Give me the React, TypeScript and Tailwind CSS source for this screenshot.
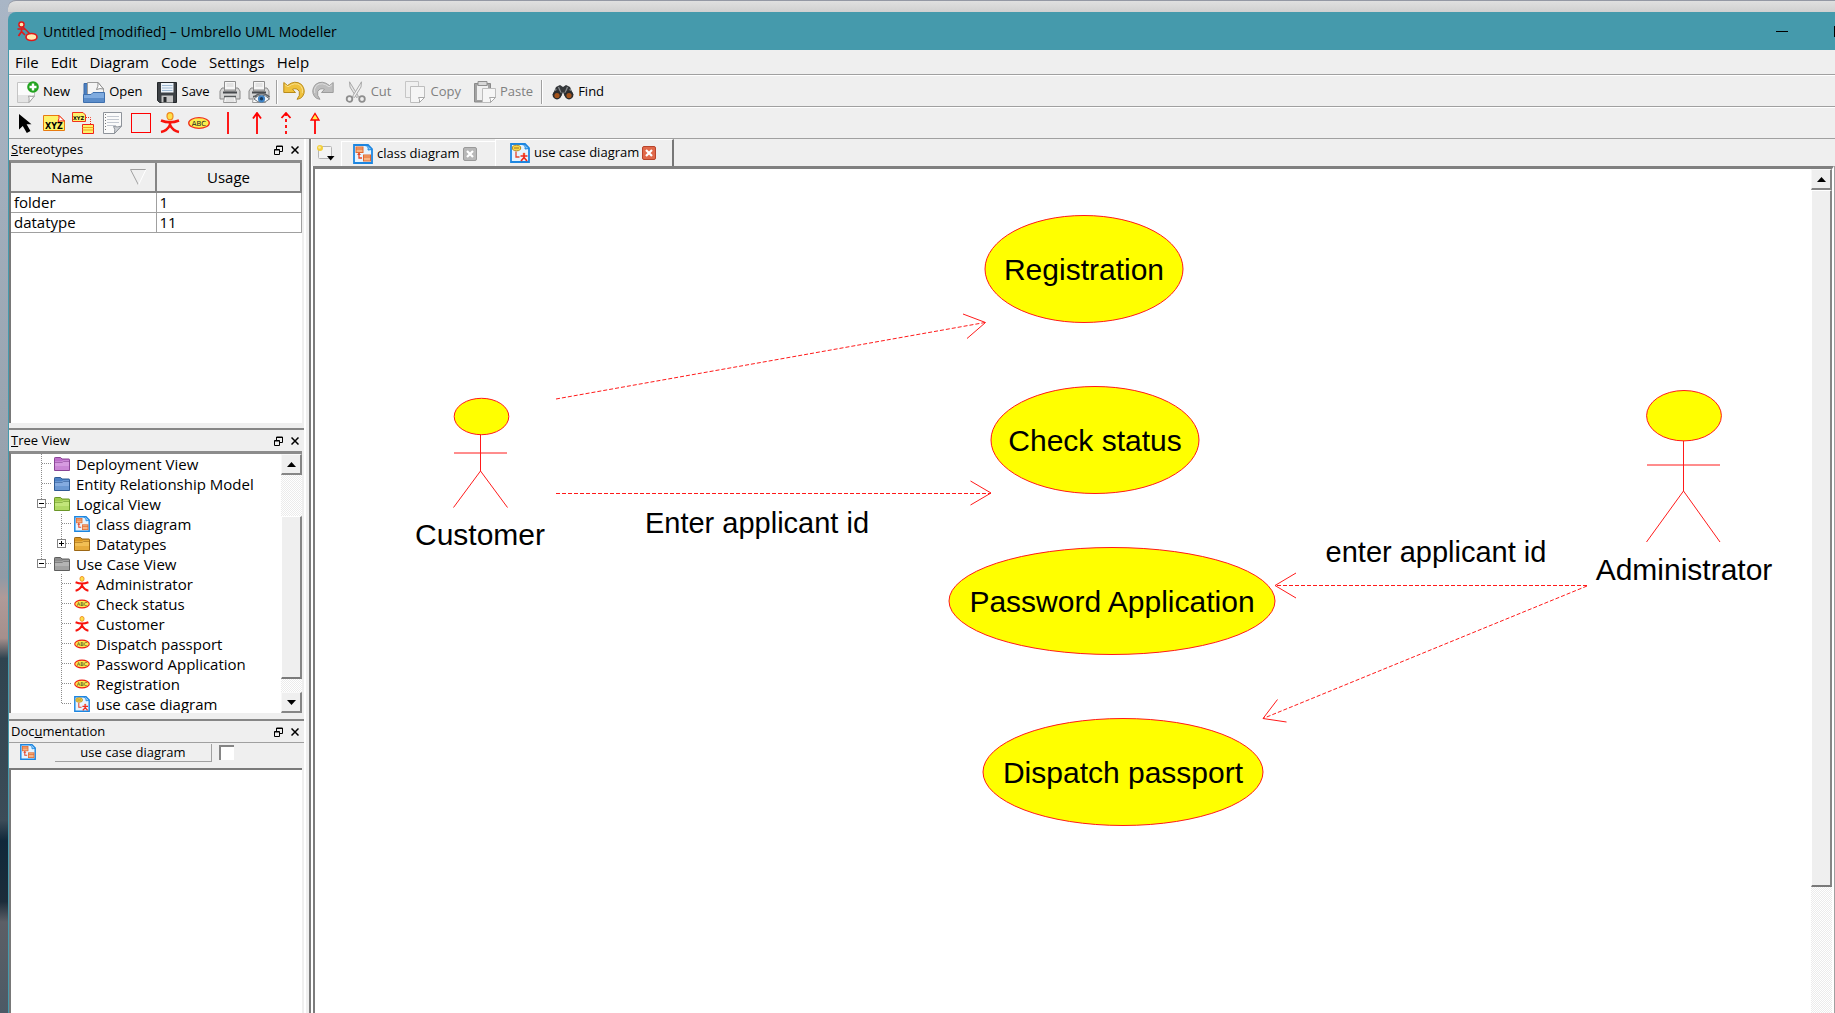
import { useState, type ReactNode } from "react";

type Kind =
  | "folder-purple"
  | "folder-blue"
  | "folder-green"
  | "folder-orange"
  | "folder-gray"
  | "class"
  | "usecase-diagram"
  | "actor"
  | "usecase";

/* ---------- icons ---------- */

function Folder({ light, dark, edge }: { light: string; dark: string; edge: string }) {
  return (
    <svg width="16" height="16" viewBox="0 0 16 16" aria-hidden="true">
      <path d="M.5 14.5V2.2Q.5 1.5 1.2 1.5H6.6L8 3H15Q15.500 3 15.500 3.600V14.500Z" fill={dark} stroke={edge} />
      <path d="M1 5.500H7.500L9 4.500H15V14H1Z" fill={light} />
      <path d="M1 6.500H8L9.500 5.500H15" fill="none" stroke={edge} strokeOpacity=".6" />
      <path d="M1 10H15V14H1Z" fill={dark} fillOpacity=".45" />
    </svg>
  );
}

function ClassDiagramIcon({ size }: { size: number }) {
  return (
    <svg width={size} height={size} viewBox="0 0 20 20" aria-hidden="true">
      <path d="M1 1H15L19 5V19H1Z" fill="#e6f4fe" stroke="#1d86e0" strokeWidth="1.800" />
      <path d="M12 1.500Q16 2 15 6L19 5.500" fill="#7cc4f8" stroke="#1d86e0" />
      <rect x="3" y="3" width="7" height="5.500" fill="#f7b483" stroke="#e26a31" />
      <path d="M3 5H10" stroke="#e26a31" />
      <path d="M6 9V14H9" fill="none" stroke="#e8472a" strokeWidth="1.300" />
      <path d="M4 11 6 8.800 8 11Z" fill="#e8472a" />
      <rect x="10.500" y="11" width="7" height="6" fill="#f7b483" stroke="#e26a31" />
      <path d="M10.500 13H17.500" stroke="#e26a31" />
    </svg>
  );
}

function UseCaseDiagramIcon({ size }: { size: number }) {
  return (
    <svg width={size} height={size} viewBox="0 0 20 20" aria-hidden="true">
      <path d="M1 1H15L19 5V19H1Z" fill="#e6f4fe" stroke="#1d86e0" strokeWidth="1.800" />
      <path d="M12 1.500Q16 2 15 6L19 5.500" fill="#7cc4f8" stroke="#1d86e0" />
      <ellipse cx="6.500" cy="5" rx="4.200" ry="2.800" fill="#f6d84a" stroke="#b78a1c" />
      <path d="M4 5H9" stroke="#a4701a" />
      <path d="M6 8.500V14H9.500" fill="none" stroke="#e8472a" strokeWidth="1.300" />
      <circle cx="14" cy="11" r="1.300" fill="#f5532e" />
      <path d="M10.500 13H17.500M14 12V15M14 14.500 11 18M14 14.500 17 18" stroke="#f02a1c" strokeWidth="1.700" />
    </svg>
  );
}

function ActorIcon({ size }: { size: number }) {
  return (
    <svg width={size} height={size} viewBox="0 0 20 20" aria-hidden="true">
      <ellipse cx="10" cy="3.600" rx="2.600" ry="3.100" fill="#fde04a" stroke="#f08a20" strokeWidth="1.100" />
      <path d="M2 7.800Q10 11 18 7.800M10 8V13M2 18.500Q7 17.500 10 12Q13 17.500 18 18.500" fill="none" stroke="#f8130c" strokeWidth="2.600" />
    </svg>
  );
}

function UseCaseIcon({ width }: { width: number }) {
  return (
    <svg width={width} height={width / 2 + 2} viewBox="0 0 22 13" aria-hidden="true">
      <ellipse cx="11" cy="6.500" rx="10" ry="5.300" fill="#fbe94e" stroke="#f01a10" strokeWidth="1.500" />
      <text x="11" y="9" textAnchor="middle" fontSize="7" fill="#3c3a1c" fontFamily="DejaVu Sans, sans-serif">
        ABC
      </text>
    </svg>
  );
}

function KindIcon({ kind }: { kind: Kind }) {
  switch (kind) {
    case "folder-purple":
      return <Folder light="#d79be0" dark="#bd6fca" edge="#8a4596" />;
    case "folder-blue":
      return <Folder light="#84abe0" dark="#4d80c4" edge="#2f5a94" />;
    case "folder-green":
      return <Folder light="#c2e67a" dark="#9ecb4c" edge="#6a9628" />;
    case "folder-orange":
      return <Folder light="#f2bf54" dark="#d99520" edge="#9c6714" />;
    case "folder-gray":
      return <Folder light="#b4b4b4" dark="#8c8c8c" edge="#5e5e5e" />;
    case "class":
      return <ClassDiagramIcon size={16} />;
    case "usecase-diagram":
      return <UseCaseDiagramIcon size={16} />;
    case "actor":
      return <ActorIcon size={16} />;
    default:
      return <UseCaseIcon width={16} />;
  }
}

function Icon22({ children }: { children: ReactNode }) {
  return (
    <svg width="22" height="22" viewBox="0 0 22 22" className="shrink-0" aria-hidden="true">
      {children}
    </svg>
  );
}

const NewIcon = () => (
  <Icon22>
    <path d="M.5 1.500H17.500V15L12 21.500H.5Z" fill="#fbfbfb" stroke="#c4c4c4" />
    <path d="M1 14H17V15.500L12 21H1Z" fill="#e4e4e4" />
    <path d="M17.500 15 12 21.500Q12.500 16 11.500 15Q15 16 17.500 15Z" fill="#fff" stroke="#a2a2a2" />
    <circle cx="16" cy="6" r="5.800" fill="#22a31f" />
    <path d="M16 2.500V9.500M12.500 6H19.500" stroke="#fff" strokeWidth="2.400" />
  </Icon22>
);

const OpenIcon = () => (
  <Icon22>
    <path d="M1 2.500H8L9 6V14H1Z" fill="#4a7fc0" stroke="#3c6aa6" />
    <path d="M4.500 14V1.500H15L20.500 8V14Z" fill="#f4f4f4" stroke="#9c9c9c" />
    <path d="M15 1.500 20.500 8Q17 7 13.500 8.500Q15.500 5.500 15 1.500Z" fill="#fff" stroke="#8e8e8e" />
    <path d="M.5 21.500V13.500H8L10 11.500H21.500V21.500Z" fill="#7fabdf" stroke="#3f70ae" />
    <path d="M1 17H21V21H1Z" fill="#5b8dca" />
  </Icon22>
);

const SaveIcon = () => (
  <Icon22>
    <path d="M1.500 1.500H20.500V21.500H3.500L1.500 19.500Z" fill="#3d4145" stroke="#24282b" />
    <path d="M5 2H17.500V11.500H5Z" fill="#eef4fa" />
    <path d="M6 4.500H16.500M6 7H16.500M6 9.500H16.500" stroke="#9fb9d2" />
    <path d="M5.500 14.500H17V21.500H5.500Z" fill="#c6c6c6" />
    <path d="M7.500 16H10.500V21H7.500Z" fill="#26292c" />
  </Icon22>
);

const PrinterShape = () => (
  <>
    <path d="M5.500.5H16.500V9H5.500Z" fill="#f6f6f6" stroke="#8e8e8e" />
    <path d="M7.500 3H14.500M7.500 5H14.500" stroke="#cfcfcf" />
    <path d="M3 7H5.500V10H16.500V7H19L21 10V18H1V10Z" fill="#d6d6d6" stroke="#8a8a8a" />
    <path d="M4 10.500H18V12.500H4Z" fill="#46494c" />
    <path d="M5.500 15.500H16.500L17.500 21.500H4.500Z" fill="#fafafa" stroke="#9a9a9a" />
    <path d="M5 15.500H17" stroke="#55585a" strokeWidth="1.500" />
  </>
);

const PrintIcon = () => (
  <Icon22>
    <PrinterShape />
    <path d="M7 18H15M6.500 20H15.500" stroke="#cfcfcf" />
  </Icon22>
);

const PreviewIcon = () => (
  <Icon22>
    <PrinterShape />
    <path d="M6 18Q13.500 10 21.500 18Q13.500 25 6 18Z" fill="#f4f8fb" stroke="#6d7277" />
    <circle cx="13.500" cy="17.800" r="3.600" fill="#3f83c6" />
    <circle cx="13.500" cy="17.800" r="1.700" fill="#173a5e" />
    <path d="M6 16Q13.500 9 21.500 16" fill="none" stroke="#5e6266" strokeWidth="1.500" />
  </Icon22>
);

const UndoIcon = () => (
  <Icon22>
    <path
      d="M.8 1.500 4.500 4.500Q12-1.500 18.500 3.500Q23.500 9.500 19.500 15.500Q17.500 18 14 18.300Q17.500 14.500 16.300 10.500Q14 6.500 9.500 8.300L12.500 11.500H.8Z"
      fill="#efc13c"
      stroke="#b98b1b"
    />
    <path d="M2 3.800 5 5.800Q12 .5 17.500 4.500Q20.500 8 19.300 12" fill="none" stroke="#f9e08a" />
  </Icon22>
);

const RedoIcon = () => (
  <Icon22>
    <path
      d="M21.200 1.500 17.500 4.500Q10-1.500 3.500 3.500Q-1.500 9.500 2.500 15.500Q4.500 18 8 18.300Q4.500 14.500 5.700 10.500Q8 6.500 12.500 8.300L9.500 11.500H21.200Z"
      fill="#bdbdbd"
      stroke="#9d9d9d"
    />
    <path d="M20 3.800 17 5.800Q10 .5 4.500 4.500Q1.500 8 2.700 12" fill="none" stroke="#dcdcdc" />
  </Icon22>
);

const CutIcon = () => (
  <Icon22>
    <path d="M4.500.8 13.500 15.500 11.500 16.500 5 6Z" fill="#e6e6e6" stroke="#a8a8a8" />
    <path d="M16.500.8 7.500 15.500 9.500 16.500 16 6Z" fill="#f2f2f2" stroke="#a8a8a8" />
    <circle cx="4.500" cy="18" r="2.800" fill="none" stroke="#8e8e8e" strokeWidth="1.800" />
    <circle cx="17" cy="18" r="2.800" fill="none" stroke="#8e8e8e" strokeWidth="1.800" />
  </Icon22>
);

const CopyIcon = () => (
  <Icon22>
    <path d="M1.500.5H14.500V16.500H1.500Z" fill="#f0f0f0" stroke="#c6c6c6" />
    <path d="M6.500 5.500H20.500V16.500L15.500 21.500H6.500Z" fill="#f5f5f5" stroke="#bdbdbd" />
    <path d="M20.500 16.500 15.500 21.500Q16 18 14.500 16.500Z" fill="#fff" stroke="#a8a8a8" />
  </Icon22>
);

const PasteIcon = () => (
  <Icon22>
    <path d="M.5 2.500H16.500V21H.5Z" fill="#a2a2a2" stroke="#8a8a8a" />
    <path d="M3 4.500H14V19H3Z" fill="#f0f0f0" />
    <path d="M4 .5H13V4.500H4Z" fill="#d8d8d8" stroke="#8f8f8f" />
    <path d="M8.500 7.500H21.500V16.500L16.500 21.500H8.500Z" fill="#f6f6f6" stroke="#bdbdbd" />
    <path d="M21.500 16.500 16.500 21.500Q17 18 15.500 16.500Z" fill="#fff" stroke="#a8a8a8" />
  </Icon22>
);

const FindIcon = () => (
  <Icon22>
    <path d="M4 6 8 4 11 6 14 4 18 6 21.500 14 12.500 15 11 11 9.500 15 .5 14Z" fill="#34373a" />
    <path d="M6.500 6 9 12M15.500 6 13 12M4 8 3 12M18 8 19 12" stroke="#85898c" strokeWidth="1.300" />
    <circle cx="5" cy="14" r="4.400" fill="#2a2c2e" />
    <circle cx="17" cy="14" r="4.400" fill="#2a2c2e" />
    <circle cx="5" cy="14.500" r="2.600" fill="#a4541c" />
    <circle cx="17" cy="14.500" r="2.600" fill="#a4541c" />
  </Icon22>
);

const DrawTools: { name: string; art: ReactNode }[] = [
  {
    name: "Select",
    art: <path d="M5 2V17.500L8.800 14 12.800 21 16.500 19 12.600 12.300H17.500Z" fill="#000" />,
  },
  {
    name: "Note box",
    art: (
      <>
        <path d="M.5 3.500H16L21.500 9V18.500H.5Z" fill="#fdf36a" stroke="#e87a10" />
        <path d="M16 3.500 21.500 9Q17.500 8.500 15 9.500 16.500 6.500 16 3.500Z" fill="#fff" stroke="#f0201a" />
        <text x="11" y="17" textAnchor="middle" fontSize="8" fontWeight="700" fontFamily="DejaVu Sans, sans-serif">
          XYZ
        </text>
      </>
    ),
  },
  {
    name: "Anchor",
    art: (
      <>
        <path d="M.5.5H11L13.500 3V9.500H.5Z" fill="#fdf36a" stroke="#f0301a" />
        <text x="6.500" y="8" textAnchor="middle" fontSize="5" fontWeight="700" fontFamily="DejaVu Sans, sans-serif">
          XYZ
        </text>
        <path d="M14 5.500H18.500V12" fill="none" stroke="#f0301a" strokeDasharray="1 1" />
        <path d="M10.500 12.500H21.500V21.500H10.500Z" fill="#fdf36a" stroke="#f0201a" />
        <path d="M10.500 15.500H21.500M10.500 18H21.500" stroke="#f0a020" />
      </>
    ),
  },
  {
    name: "Note",
    art: (
      <>
        <path d="M2.500.5H20.500V14L13.500 21.500H2.500Z" fill="#fafafa" stroke="#8e939a" />
        <path d="M6 4.500H18M6 7.500H18M6 10.500H18M6 13.500H15" stroke="#c3c8d0" />
        <path d="M4.500 2V20" stroke="#777" strokeDasharray="1 2" />
        <path d="M20.500 14 13.500 21.500Q14.500 16.500 12.500 14.500Q17 15.500 20.500 14Z" fill="#cfd2d6" stroke="#8e939a" />
      </>
    ),
  },
  { name: "Box", art: <rect x="1.500" y="1.500" width="19" height="19" fill="none" stroke="#ff0000" /> },
  {
    name: "Actor",
    art: (
      <>
        <ellipse cx="11" cy="4.200" rx="3" ry="3.600" fill="#fde04a" stroke="#f08a20" strokeWidth="1.200" />
        <path d="M2 8.500Q11 12 20 8.500M11 9V14M2 20Q8 19 11 13Q14 19 20 20" fill="none" stroke="#f8130c" strokeWidth="2.600" />
      </>
    ),
  },
  {
    name: "Use case",
    art: (
      <>
        <ellipse cx="11" cy="11" rx="10.300" ry="5.300" fill="#fbf04e" stroke="#f0301a" strokeWidth="1.300" />
        <text x="11" y="13.600" textAnchor="middle" fontSize="7" fill="#222" fontFamily="DejaVu Sans, sans-serif">
          ABC
        </text>
      </>
    ),
  },
  { name: "Association", art: <path d="M11 0V22" stroke="#f00" strokeWidth="1.800" /> },
  {
    name: "Directed association",
    art: <path d="M11 22V1M7 6.500 11 1 15 6.500" fill="none" stroke="#f00" strokeWidth="1.800" />,
  },
  {
    name: "Dependency",
    art: (
      <path d="M11 1V4M11 7V10M11 13V16M11 19V22M6.500 6 11 1 15.500 6" fill="none" stroke="#f00" strokeWidth="1.800" />
    ),
  },
  {
    name: "Generalization",
    art: (
      <>
        <path d="M11 22V8" stroke="#f00" strokeWidth="1.800" />
        <path d="M7 8 11 1.500 15 8Z" fill="#fdf04a" stroke="#f00" strokeWidth="1.300" />
      </>
    ),
  },
];

/* ---------- small widgets ---------- */

function ToolButton({ icon, label, name, disabled }: { icon: ReactNode; label?: string; name?: string; disabled?: boolean }) {
  return (
    <button
      type="button"
      aria-label={label ?? name}
      disabled={disabled}
      className={
        label
          ? "flex h-full items-center gap-1 pr-[6px] pl-[7px] text-[13px] disabled:text-[#808080]"
          : "flex h-full w-[29px] items-center justify-center"
      }
    >
      {icon}
      {label}
    </button>
  );
}

const Separator = () => <div className="h-6 w-[2px] border-l border-[#a0a0a0] bg-white" />;

function DockTitle({ children }: { children: ReactNode }) {
  return (
    <div className="flex h-[21px] shrink-0 items-center pt-px pr-[5px] pl-[2px] text-[13px]">
      <h2 className="grow">{children}</h2>
      <button type="button" aria-label="Float" className="mr-2">
        <svg width="9" height="10" viewBox="0 0 9 10" aria-hidden="true">
          <path d="M2.500 4V1H8.500V6.500H6M2.500 1.500H8.500" fill="none" stroke="#000" />
          <path d="M.5 4.500H5.500V9.500H.5ZM.5 5H5.500" fill="none" stroke="#000" />
        </svg>
      </button>
      <button type="button" aria-label="Close">
        <svg width="8" height="8" viewBox="0 0 8 8" aria-hidden="true">
          <path d="M.5.5 7.500 7.500M7.500.5.5 7.500" stroke="#000" strokeWidth="1.500" />
        </svg>
      </button>
    </div>
  );
}

function ArrowButton({ up }: { up?: boolean }) {
  return (
    <button
      type="button"
      aria-label={up ? "Scroll up" : "Scroll down"}
      className="flex h-[21px] shrink-0 items-center justify-center border-t border-r-2 border-b-2 border-l border-t-[#f8f8f8] border-r-[#868686] border-b-[#868686] border-l-[#f8f8f8] bg-[#efefef]"
    >
      <svg width="9" height="5" viewBox="0 0 9 5" aria-hidden="true">
        <path d={up ? "M0 5 4.500 0 9 5Z" : "M0 0 4.500 5 9 0Z"} />
      </svg>
    </button>
  );
}

const track =
  "flex w-[21px] shrink-0 flex-col bg-[repeating-conic-gradient(#ebebeb_0_25%,#ffffff_0_50%)] bg-[length:2px_2px]";
const thumb =
  "border-t border-r-2 border-b-2 border-l border-t-white border-r-[#868686] border-b-[#7a7a7a] border-l-white bg-[#efefef]";

/* ---------- tree ---------- */

type Guide = "none" | "line" | "tee" | "end" | "minus" | "plus" | "last-minus";

const rows: { label: string; kind: Kind; guides: Guide[] }[] = [
  { label: "Deployment View", kind: "folder-purple", guides: ["tee"] },
  { label: "Entity Relationship Model", kind: "folder-blue", guides: ["tee"] },
  { label: "Logical View", kind: "folder-green", guides: ["minus"] },
  { label: "class diagram", kind: "class", guides: ["line", "tee"] },
  { label: "Datatypes", kind: "folder-orange", guides: ["line", "plus"] },
  { label: "Use Case View", kind: "folder-gray", guides: ["last-minus"] },
  { label: "Administrator", kind: "actor", guides: ["none", "tee"] },
  { label: "Check status", kind: "usecase", guides: ["none", "tee"] },
  { label: "Customer", kind: "actor", guides: ["none", "tee"] },
  { label: "Dispatch passport", kind: "usecase", guides: ["none", "tee"] },
  { label: "Password Application", kind: "usecase", guides: ["none", "tee"] },
  { label: "Registration", kind: "usecase", guides: ["none", "tee"] },
  { label: "use case diagram", kind: "usecase-diagram", guides: ["none", "end"] },
];

function GuideCell({ guide }: { guide: Guide }) {
  const box = guide === "minus" || guide === "plus" || guide === "last-minus";
  const full = guide === "line" || guide === "tee" || guide === "minus";
  const half = guide === "end" || guide === "last-minus" || guide === "plus";
  return (
    <svg width="20" height="20" viewBox="0 0 20 20" className="shrink-0" aria-hidden="true">
      {full && <path d="M9.500 0V20" stroke="#8c8c8c" strokeDasharray="1 1" />}
      {half && <path d="M9.500 0V10" stroke="#8c8c8c" strokeDasharray="1 1" />}
      {guide !== "none" && guide !== "line" && <path d="M10 9.500H19" stroke="#8c8c8c" strokeDasharray="1 1" />}
      {box && (
        <>
          <rect x="5.500" y="5.500" width="8" height="8" fill="#fff" stroke="#848484" />
          <path d={guide === "plus" ? "M7 9.500H12M9.500 7V12" : "M7 9.500H12"} stroke="#000" />
        </>
      )}
    </svg>
  );
}

/* ---------- diagram ---------- */

const useCases = [
  { label: "Registration", cx: 1084, cy: 269, rx: 99 },
  { label: "Check status", cx: 1095, cy: 440, rx: 104 },
  { label: "Password Application", cx: 1112, cy: 601, rx: 163 },
  { label: "Dispatch passport", cx: 1123, cy: 772, rx: 140 },
];

function Diagram() {
  return (
    <svg
      width="1496"
      height="844"
      viewBox="315 169 1496 844"
      className="block max-w-none shrink-0"
      fill="none"
      stroke="#ff1a1a"
      fontFamily="Liberation Sans, Arial, sans-serif"
      fontSize="30"
      role="img"
      aria-label="Use case diagram"
    >
      <path d="M556 399 985 322.500M556 493.500H991M1587 585.500H1275M1587 586 1263 718.500" strokeDasharray="4 2" />
      <path d="M963 314 985.500 322.500 967 338.500M970.500 481 991 493 970.500 505M1296 573 1275 585.500 1296 598M1277.500 699.500 1263 718.500 1286.500 722" />
      {useCases.map((u) => (
        <g key={u.label}>
          <ellipse cx={u.cx} cy={u.cy} rx={u.rx} ry="53.500" fill="#ffff00" />
          <text x={u.cx} y={u.cy + 11} textAnchor="middle" fill="#000" stroke="none">
            {u.label}
          </text>
        </g>
      ))}
      <ellipse cx="481.500" cy="416.500" rx="27.300" ry="18.200" fill="#ffff00" />
      <path d="M480.500 434.500V471M454 453H507M453.500 507.500 480.500 471 507.500 507.500" />
      <ellipse cx="1684" cy="415.700" rx="37.400" ry="25.200" fill="#ffff00" />
      <path d="M1683.500 441V491M1647 465H1720M1646.500 542 1683.500 491 1720 542" />
      <g fill="#000" stroke="none" textAnchor="middle">
        <text x="480" y="545">Customer</text>
        <text x="1684" y="580">Administrator</text>
      </g>
      <g fill="#000" stroke="none" textAnchor="middle" fontSize="29">
        <text x="757" y="533">Enter applicant id</text>
        <text x="1436" y="562">enter applicant id</text>
      </g>
    </svg>
  );
}

const TabClose = ({ active }: { active?: boolean }) => (
  <svg width="14" height="14" viewBox="0 0 14 14" aria-hidden="true">
    <rect x=".5" y=".5" width="13" height="13" rx="1.500" fill={active ? "#e0694a" : "#b8b8b8"} stroke={active ? "#b8432a" : "#9a9a9a"} />
    <path d="M4 4 10 10M10 4 4 10" stroke="#fff" strokeWidth="2.200" />
  </svg>
);

export default function App() {
  const [documented, setDocumented] = useState(false);
  return (
    <div className="flex h-screen overflow-hidden bg-[linear-gradient(180deg,#a9b6c6_0%,#9aa5b1_40%,#8f9aa6_57%,#b09a98_59%,#a58f8c_63%,#2f4450_65%,#3c4c58_81%,#10283a_83%,#1c2c3a_89%,#5c5f66_91%,#4c5a66_100%)] font-['Open_Sans','Noto_Sans',sans-serif] text-black">
      <div className="w-2 shrink-0" />
      <div className="flex min-w-0 grow flex-col">
        <div className="h-3 shrink-0 rounded-tl-lg border-t border-[#9498a4] bg-[linear-gradient(#e0e0e0,#d0d0d0)]" />
        <header className="flex h-[38px] shrink-0 items-center rounded-tl-lg bg-[#459aac] pl-[9px]">
          <svg width="21" height="21" viewBox="0 0 21 21" className="shrink-0" aria-hidden="true">
            <path d="M6 6 14 14" stroke="#d02020" strokeWidth="1.500" />
            <circle cx="4.500" cy="3.500" r="2.600" fill="#ffe9b0" stroke="#e01818" strokeWidth="1.500" />
            <path d="M4.500 6.500V10.500M.5 8H8M1.500 15 4.500 10.500 8 14" fill="none" stroke="#e01818" strokeWidth="1.700" />
            <ellipse cx="14.500" cy="16" rx="5.500" ry="3.500" fill="#ffe9b0" stroke="#e01818" strokeWidth="1.600" />
          </svg>
          <h1 className="ml-[5px] grow pt-px text-[14px]">Untitled [modified] – Umbrello UML Modeller</h1>
          <button type="button" aria-label="Minimize" className="mr-[46px] flex h-full w-3 items-center">
            <span className="h-px w-full bg-black" />
          </button>
          <button type="button" aria-label="Maximize" className="h-[11px] w-px bg-black" />
        </header>

        <div className="flex min-h-0 grow flex-col border-l border-[#459aac] bg-[#efefef]">
          <nav className="flex h-[25px] shrink-0 items-center border-b border-[#a0a0a0] text-[15px]">
            {["File", "Edit", "Diagram", "Code", "Settings", "Help"].map((m) => (
              <button key={m} type="button" className="px-[6px]">
                {m}
              </button>
            ))}
          </nav>

          <div role="toolbar" aria-label="Main toolbar" className="flex h-8 shrink-0 items-center border-t border-b border-t-white border-b-[#a0a0a0] pt-px pl-px">
            <ToolButton icon={<NewIcon />} label="New" />
            <ToolButton icon={<OpenIcon />} label="Open" />
            <ToolButton icon={<SaveIcon />} label="Save" />
            <ToolButton icon={<PrintIcon />} name="Print" />
            <ToolButton icon={<PreviewIcon />} name="Print preview" />
            <div className="px-[2px]">
              <Separator />
            </div>
            <ToolButton icon={<UndoIcon />} name="Undo" />
            <ToolButton icon={<RedoIcon />} name="Redo" />
            <ToolButton icon={<CutIcon />} label="Cut" disabled />
            <ToolButton icon={<CopyIcon />} label="Copy" disabled />
            <ToolButton icon={<PasteIcon />} label="Paste" disabled />
            <div className="px-[2px]">
              <Separator />
            </div>
            <ToolButton icon={<FindIcon />} label="Find" />
          </div>

          <div role="toolbar" aria-label="Work toolbar" className="flex h-8 shrink-0 items-center border-t border-b border-t-white border-b-[#a0a0a0] pl-px">
            {DrawTools.map((t) => (
              <ToolButton key={t.name} name={t.name} icon={<Icon22>{t.art}</Icon22>} />
            ))}
          </div>

          <div className="flex min-h-0 grow">
            <aside className="flex w-[297px] shrink-0 flex-col border-r-2 border-white">
              <section className="flex h-[284px] shrink-0 flex-col">
                <DockTitle>
                  <u>S</u>tereotypes
                </DockTitle>
                <div className="mr-[2px] grow border-t-[3px] border-l-2 border-t-[#8c8c8c] border-l-[#787878] bg-white">
                  <table className="w-full table-fixed border-collapse text-[15px]">
                    <thead>
                      <tr className="h-[29px] bg-[#efefef]">
                        <th className="border-r-2 border-b-2 border-[#858585] p-0 font-normal">
                          <button type="button" className="flex w-full items-center pl-10">
                            <span className="grow text-left">Name</span>
                            <svg width="17" height="17" viewBox="0 0 17 17" className="mr-2" aria-hidden="true">
                              <path d="M8.500 16 .5.500H16" fill="none" stroke="#a0a0a0" />
                              <path d="M16 .5 8.500 16" stroke="#fff" />
                            </svg>
                          </button>
                        </th>
                        <th className="border-r-2 border-b-2 border-[#858585] p-0 font-normal">Usage</th>
                      </tr>
                    </thead>
                    <tbody>
                      {[
                        ["folder", "1"],
                        ["datatype", "11"],
                      ].map(([name, usage]) => (
                        <tr key={name} className="h-5 leading-[19px]">
                          <td className="border-r border-b border-[#a0a0a0] p-0 pl-[3px]">{name}</td>
                          <td className="border-r border-b border-[#a0a0a0] p-0 pl-[3px]">{usage}</td>
                        </tr>
                      ))}
                    </tbody>
                  </table>
                </div>
              </section>

              <section className="mt-[5px] flex h-[285px] shrink-0 flex-col border-t-2 border-[#868686]">
                <DockTitle>
                  <u>T</u>ree View
                </DockTitle>
                <div className="mr-[2px] flex min-h-0 grow border-t-[3px] border-l-2 border-t-[#8c8c8c] border-l-[#787878] bg-white">
                  <ul className="min-w-0 grow overflow-hidden pl-[21px] text-[15px] leading-5">
                    {rows.map((r) => (
                      <li key={r.label} className="flex h-5 items-center whitespace-nowrap">
                        {r.guides.map((g, i) => (
                          <GuideCell key={i} guide={g} />
                        ))}
                        <span className="mr-[6px] ml-[2px] flex w-4 shrink-0">
                          <KindIcon kind={r.kind} />
                        </span>
                        {r.label}
                      </li>
                    ))}
                  </ul>
                  <div className={track}>
                    <ArrowButton up />
                    <div className="h-[41px]" />
                    <div className={`${thumb} grow`} />
                    <div className="h-[13px]" />
                    <ArrowButton />
                  </div>
                </div>
              </section>

              <section className="mt-[6px] flex min-h-0 grow flex-col border-t-2 border-[#868686]">
                <DockTitle>
                  Doc<u>u</u>mentation
                </DockTitle>
                <div className="flex h-[26px] shrink-0 items-start border-t border-[#a0a0a0] pl-[11px] text-[13px]">
                  <div className="mt-px">
                    <ClassDiagramIcon size={16} />
                  </div>
                  <button type="button" className="mt-px ml-[19px] h-[18px] w-[157px] border-r border-b border-[#a0a0a0] leading-[17px]">
                    use case diagram
                  </button>
                  <input
                    type="checkbox"
                    aria-label="Documented"
                    checked={documented}
                    onChange={(e) => setDocumented(e.target.checked)}
                    className="mt-[2px] ml-[7px] h-[15px] w-[15px] appearance-none border-t-2 border-l-2 border-[#858585] bg-white checked:bg-[#858585]"
                  />
                </div>
                <textarea
                  aria-label="Documentation text"
                  className="mr-[2px] block grow resize-none border-t-2 border-l-2 border-t-[#7a7a7a] border-l-[#787878] bg-white p-1 text-[15px] outline-none"
                />
              </section>
            </aside>

            <div className="w-[3px] shrink-0" />

            <main className="flex min-w-0 grow flex-col border-l-2 border-[#7c7c7c]">
              <div className="flex h-[27px] shrink-0 border-l border-white text-[13px]">
                <button type="button" aria-label="New diagram" className="flex w-[29px] items-center pl-1">
                  <svg width="19" height="18" viewBox="0 0 19 18" aria-hidden="true">
                    <rect x="2.500" y="2.500" width="13" height="12" rx="1" fill="#f4f4f4" stroke="#b4b4b4" />
                    <circle cx="4" cy="4" r="3" fill="#f3cf3a" />
                    <circle cx="3.500" cy="3.500" r="1.300" fill="#fbeaa0" />
                    <path d="M11 12H18.500L14.700 16.500Z" />
                  </svg>
                </button>
                <div className="mt-[2px] flex w-[154px] items-center border-t border-l border-white pl-[11px]">
                  <ClassDiagramIcon size={20} />
                  <button type="button" className="ml-1 grow text-left">
                    class diagram
                  </button>
                  <button type="button" aria-label="Close class diagram" className="mr-[18px]">
                    <TabClose />
                  </button>
                </div>
                <div className="flex w-[179px] items-center border-t border-r-2 border-l border-t-white border-r-[#777] border-l-white pl-[14px]">
                  <UseCaseDiagramIcon size={20} />
                  <button type="button" className="ml-1 grow text-left">
                    use case diagram
                  </button>
                  <button type="button" aria-label="Close use case diagram" className="mr-4">
                    <TabClose active />
                  </button>
                </div>
              </div>
              <div className="flex min-h-0 grow border-r border-l-2 border-white border-r-[#a0a0a0]">
                <div className="flex min-h-0 min-w-0 grow border-t-[3px] border-r-2 border-l-2 border-t-[#808080] border-r-white border-l-[#7c7c7c] bg-white">
                  <div className="min-w-0 grow overflow-hidden">
                    <Diagram />
                  </div>
                  <div className={track}>
                    <ArrowButton up />
                    <div className={`${thumb} h-[697px]`} />
                  </div>
                </div>
              </div>
            </main>
          </div>
        </div>
      </div>
    </div>
  );
}
